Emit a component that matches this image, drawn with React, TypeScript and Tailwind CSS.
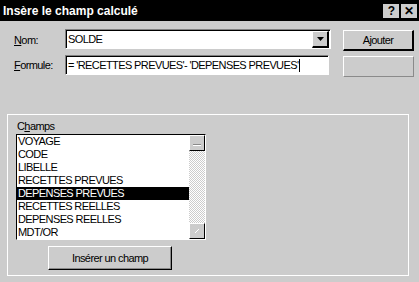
import React from "react";

const fields = [
  "VOYAGE",
  "CODE",
  "LIBELLE",
  "RECETTES PREVUES",
  "DEPENSES PREVUES",
  "RECETTES REELLES",
  "DEPENSES REELLES",
  "MDT/OR",
];

function TitleButton({ children }: { children: React.ReactNode }) {
  return (
    <div className="flex h-[14px] w-[16px] items-center justify-center bg-[#cccccc] text-[12px] font-bold leading-none text-black">
      {children}
    </div>
  );
}

export default function App() {
  const selected = "DEPENSES PREVUES";

  return (
    <div className="flex h-[282px] w-[419px] flex-col overflow-hidden bg-[#cccccc] font-['Liberation_Sans',Arial,sans-serif] text-[11px] tracking-[-0.6px] text-black">
      {/* title bar */}
      <div className="flex h-[21px] items-center justify-between bg-black pl-[3px] pr-[2px]">
        <span className="text-[12px] font-bold tracking-normal text-white">
          Insère le champ calculé
        </span>
        <div className="flex gap-[2px]">
          <TitleButton>?</TitleButton>
          <TitleButton>✕</TitleButton>
        </div>
      </div>

      {/* top form */}
      <div className="flex pl-[14px] pt-[8px]">
        <div className="flex w-[317px] flex-col gap-[6px]">
          <div className="flex h-[20px] items-center">
            <label className="mt-[3px] w-[51px]">
              <span className="underline">N</span>om:
            </label>
            <div className="flex h-[20px] flex-1 items-center border-l border-t border-b border-r border-b-white border-l-[#808080] border-r-white border-t-[#808080] bg-white pl-[2px] shadow-[inset_1px_1px_0_#000]">
              <span className="flex-1">SOLDE</span>
              <div className="mr-[1px] flex h-[17px] w-[17px] items-center justify-center border-b-2 border-l border-r-2 border-t border-b-black border-l-white border-r-black border-t-white bg-[#cccccc]">
                <svg width="7" height="4" viewBox="0 0 7 4">
                  <path d="M0 0h7L3.5 4z" fill="#000" />
                </svg>
              </div>
            </div>
          </div>
          <div className="flex h-[20px] items-center">
            <label className="w-[51px]">
              <span className="underline">F</span>ormule:
            </label>
            <div className="mr-[2px] flex h-[20px] flex-1 items-center border-b border-l border-r border-t border-b-white border-l-[#808080] border-r-white border-t-[#808080] bg-white pl-[2px] shadow-[inset_1px_1px_0_#000]">
              <span>= 'RECETTES PREVUES'- 'DEPENSES PREVUES'</span>
              <span className="ml-[1px] inline-block h-[13px] w-[1px] bg-black" />
            </div>
          </div>
        </div>

        <div className="ml-[12px] mt-[1px] flex w-[71px] flex-col gap-[5px]">
          <button className="h-[21px] w-full border-b-2 border-l border-r-2 border-t border-b-black border-l-white border-r-black border-t-white bg-[#cccccc] text-[11px]">
            Ajouter
          </button>
          <button className="h-[21px] w-full border-b border-l border-r border-t border-b-[#8a8a8a] border-l-white border-r-[#8a8a8a] border-t-white bg-[#cccccc]" />
        </div>
      </div>

      {/* Champs group */}
      <div className="ml-[7px] mt-[37px] flex h-[162px] w-[402px] flex-col border border-white pl-[8px] pt-[5px]">
        <div className="ml-[1px] h-[13px] leading-[13px]">
          C<span className="underline">h</span>amps
        </div>
        <div className="mt-[1px] flex h-[106px] w-[190px] border-b border-l border-r border-t border-b-white border-l-black border-r-white border-t-black">
          <div className="flex w-[172px] flex-col bg-white">
            {fields.map((f) => (
              <div
                key={f}
                className={`h-[13px] pl-[1px] leading-[13px] ${
                  f === selected ? "bg-black text-white" : "text-black"
                }`}
              >
                {f}
              </div>
            ))}
          </div>
          <div className="flex w-[16px] flex-col">
            <div className="flex h-[16px] items-end justify-center border-b border-l border-r border-t border-b-black border-l-white border-r-black border-t-white bg-[#cccccc] pb-[4px]">
              <svg width="8" height="2" viewBox="0 0 8 2">
                <rect x="0" y="0" width="8" height="1" fill="#8a8a8a" />
                <rect x="0" y="1" width="8" height="1" fill="#fff" />
              </svg>
            </div>
            <div className="flex-1 bg-[repeating-conic-gradient(#ffffff_0%_25%,#cccccc_0%_50%)] bg-[length:2px_2px]" />
            <div className="flex h-[16px] items-center justify-center border-b border-l border-r border-t border-b-black border-l-white border-r-black border-t-white bg-[#cccccc]">
              <svg width="4" height="4" viewBox="0 0 4 4">
                <path d="M0 4L4 0" stroke="#fff" strokeWidth="1" />
              </svg>
            </div>
          </div>
        </div>
        <button className="ml-[32px] mt-[6px] h-[24px] w-[124px] border-b border-l border-r border-t border-b-black border-l-white border-r-black border-t-white bg-[#cccccc] text-[11px] shadow-[inset_-1px_-1px_0_#8a8a8a]">
          Insérer un champ
        </button>
      </div>
    </div>
  );
}
